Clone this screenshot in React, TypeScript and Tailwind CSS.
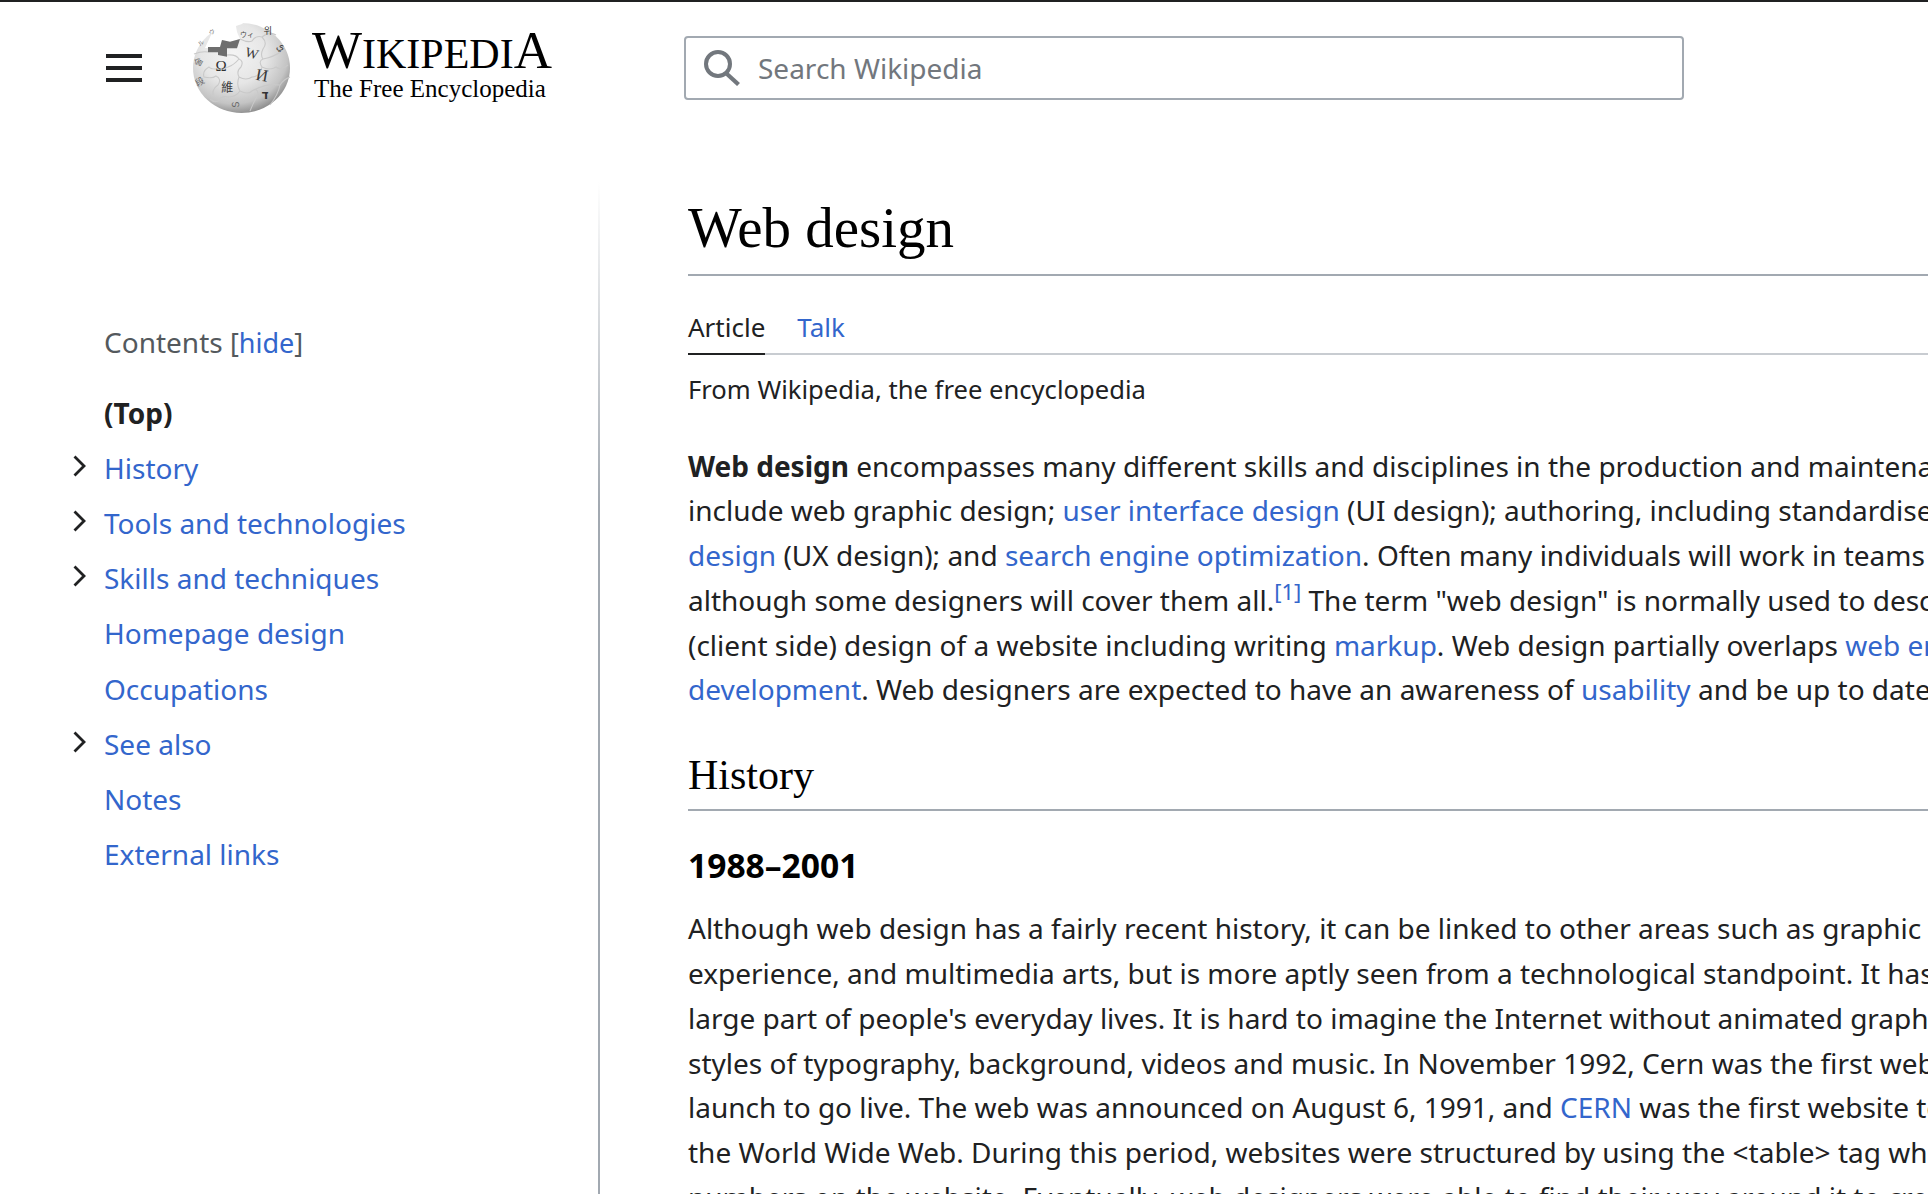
import React from 'react';

const link = 'text-[#3366cc]';

const tocItems = [
  { label: 'History', sub: true },
  { label: 'Tools and technologies', sub: true },
  { label: 'Skills and techniques', sub: true },
  { label: 'Homepage design', sub: false },
  { label: 'Occupations', sub: false },
  { label: 'See also', sub: true },
  { label: 'Notes', sub: false },
  { label: 'External links', sub: false },
];

const Globe = () => (
  <svg width="100" height="92" viewBox="0 0 100 92" className="shrink-0">
    <defs>
      <radialGradient id="sphere" cx="42%" cy="34%" r="68%">
        <stop offset="0%" stopColor="#f4f4f4" />
        <stop offset="50%" stopColor="#e6e6e6" />
        <stop offset="82%" stopColor="#c4c4c4" />
        <stop offset="100%" stopColor="#8c8c8c" />
      </radialGradient>
    </defs>
    <ellipse cx="49.5" cy="47" rx="48.5" ry="45" fill="url(#sphere)" />
    {/* missing puzzle pieces at the top */}
    <path d="M29 -1 L26 6 L19 14 L13 27 L28 27 L30 19 L38 20.7 L48 18 L45 11 L44 5 L50 3 L54 -1 Z" fill="#fff" />
    <path d="M0 0 L14 0 L10 8 L5 14 L0 20 Z" fill="#fff" />
    <path d="M16 26 L28 26 L30 19 L38 20.7 L48 18 L45 27.3 L35 27.3 L35 35.7 L26 34 L26 31.3 L16 31.3 Z" fill="#6e6e6e" />
    {/* seams between the pieces */}
    <path
      d="M2 33 Q10 30 16 31 M35 34 Q44 33 47 38 Q52 40 49 46 Q44 50 47 56 Q54 60 60 56 Q68 56 70 46 Q66 40 71 38 Q82 36 90 30
         M48 18 Q56 22 60 20 Q64 14 70 16 Q76 22 71 28 Q68 34 71 38
         M47 38 Q42 44 36 46 Q20 50 17 46 Q10 50 12 56 Q20 58 24 55 Q30 58 26 64 Q20 68 21 74
         M47 56 Q44 64 48 70 Q56 74 60 70 Q66 66 66 74 Q62 80 58 90
         M60 70 Q74 62 88 64 Q92 58 98 56
         M48 70 Q44 76 36 76 Q30 74 26 80 Q22 82 18 78
         M70 46 Q78 50 84 46 Q88 50 96 44
         M70 16 Q78 10 84 14 M88 64 Q86 74 78 84"
      fill="none"
      stroke="#c9c9c9"
      strokeWidth="1.1"
    />
    <text x="29" y="50" textAnchor="middle" fontSize="15" fontFamily="'Liberation Serif', serif" fill="#333">Ω</text>
    <text x="60" y="37" textAnchor="middle" fontSize="14" fontFamily="'Liberation Serif', serif" fill="#3a3a3a" transform="rotate(16 60 32)">W</text>
    <text x="70" y="60" textAnchor="middle" fontSize="17" fontFamily="'Liberation Serif', serif" fill="#3a3a3a" transform="rotate(10 70 55)">И</text>
    <text x="35.3" y="71" textAnchor="middle" fontSize="12" fontFamily="'Noto Sans CJK TC', serif" fill="#3a3a3a">維</text>
    <text x="73" y="78" textAnchor="middle" fontSize="12" fontWeight="700" fontFamily="'DejaVu Sans', serif" fill="#333">ד</text>
    <text x="55" y="16" textAnchor="middle" fontSize="7" fontFamily="'Noto Sans CJK JP', serif" fill="#444">ウィ</text>
    <text x="76" y="13" textAnchor="middle" fontSize="9" fontFamily="'Noto Sans CJK KR', serif" fill="#333">위</text>
    <text x="88" y="28" textAnchor="middle" fontSize="11" fontFamily="'DejaVu Sans', serif" fill="#444">ي</text>
    <text x="6.5" y="44" textAnchor="middle" fontSize="9" fontFamily="'Noto Sans CJK KR', serif" fill="#666" transform="rotate(-60 6.5 41)">술</text>
    <text x="8" y="64" textAnchor="middle" fontSize="9" fontFamily="'Noto Sans CJK SC', serif" fill="#666" transform="rotate(-30 8 61)">段</text>
    <text x="20" y="13" textAnchor="middle" fontSize="6" fontFamily="'Noto Sans CJK JP', serif" fill="#777" transform="rotate(-40 20 11)">ウ</text>
    <text x="9" y="24" textAnchor="middle" fontSize="6" fontFamily="'Noto Sans CJK JP', serif" fill="#777" transform="rotate(-40 9 22)">ル</text>
    <text x="43" y="86" textAnchor="middle" fontSize="9" fontFamily="'DejaVu Sans', serif" fill="#666">ഗ</text>
  </svg>
);

const Chevron = () => (
  <svg width="14" height="24" viewBox="0 0 14 24" className="shrink-0 mt-[9px] -ml-[1px]">
    <path d="M1.5 1.5 L11 11 L1.5 20.5" fill="none" stroke="#202122" strokeWidth="2.8" />
  </svg>
);

export default function App() {
  return (
    <div className="w-[1928px] h-[1194px] overflow-hidden bg-white border-t-2 border-[#202122] text-[28px] leading-[44.8px] text-[#202122] font-['Noto_Sans',sans-serif]">
      <header className="flex items-start h-[180px] pl-[106px]">
        <div className="flex flex-col gap-[8px] w-[36px] mt-[52px] shrink-0">
          <div className="h-[4px] bg-[#202122]" />
          <div className="h-[4px] bg-[#202122]" />
          <div className="h-[4px] bg-[#202122]" />
        </div>
        <div className="ml-[50px] mt-[19px]">
          <Globe />
        </div>
        <div className="ml-[20px] mt-[24px] w-[240px] shrink-0 font-['Liberation_Serif',serif] text-black">
          <div className="h-[48px] leading-[48px] text-[42px] whitespace-nowrap">
            <span className="text-[53px]">W</span>IKIPEDI<span className="text-[53px]">A</span>
          </div>
          <div className="mt-[1px] pl-[2px] leading-[28px] text-[25px] whitespace-nowrap">The Free Encyclopedia</div>
        </div>
        <div className="ml-[132px] mt-[34px] w-[1000px] h-[64px] shrink-0 flex items-center rounded-[4px] border-2 border-[#a2a9b1] pl-[18px]">
          <svg width="36" height="36" viewBox="0 0 36 36" className="shrink-0">
            <circle cx="14" cy="14" r="12" fill="none" stroke="#72777d" strokeWidth="4" />
            <path d="M23 24 L34.5 34.5" fill="none" stroke="#72777d" strokeWidth="4.2" />
          </svg>
          <span className="ml-[18px] text-[#72777d]">Search Wikipedia</span>
        </div>
      </header>

      <div className="flex h-[1012px]">
        <aside className="w-[598px] shrink-0 pl-[74px] pt-[138px]">
          <div className="pl-[30px] text-[#54595d]">
            Contents <span className="text-[27px]">[<span className={link}>hide</span>]</span>
          </div>
          <div className="pl-[30px] mt-[25px] h-[55.15px] font-bold">(Top)</div>
          {tocItems.map(item => (
            <div key={item.label} className="flex h-[55.15px]">
              <div className="w-[30px] shrink-0">{item.sub && <Chevron />}</div>
              <span className={link}>{item.label}</span>
            </div>
          ))}
        </aside>
        <div className="w-[2px] shrink-0 bg-linear-to-b from-white to-[#a2a9b1] to-[32%]" />

        <main className="flex-1 min-w-0 pl-[88px] whitespace-nowrap">
          <h1 className="mt-[20px] h-[72px] text-[57px] leading-[52px] text-black font-['Liberation_Serif',serif]">Web design</h1>
          <div className="h-[2px] bg-[#a2a9b1]" />
          <div className="flex gap-[32px] h-[79px] border-b-2 border-[#c8ccd1] text-[26px]">
            <div className="pt-[28.5px] h-[79px] border-b-2 border-[#202122]">Article</div>
            <div className={`pt-[28.5px] ${link}`}>Talk</div>
          </div>
          <div className="mt-[12.5px] text-[25.6px] leading-[44px]">From Wikipedia, the free encyclopedia</div>
          <div className="mt-[32px]">
            <p><b>Web design</b> encompasses many different skills and disciplines in the production and maintenance of websites. The different areas of web design</p>
            <p>include web graphic design; <span className={link}>user interface design</span> (UI design); authoring, including standardised code and proprietary software; user experience</p>
            <p><span className={link}>design</span> (UX design); and <span className={link}>search engine optimization</span>. Often many individuals will work in teams covering different aspects of the design process,</p>
            <p>although some designers will cover them all.<sup className={`text-[22px] ${link}`}>[1]</sup> The term "web design" is normally used to describe the design process relating to the front-end</p>
            <p>(client side) design of a website including writing <span className={link}>markup</span>. Web design partially overlaps <span className={link}>web engineering</span> in the broader scope of web</p>
            <p><span className={link}>development</span>. Web designers are expected to have an awareness of <span className={link}>usability</span> and be up to date with web accessibility guidelines.</p>
          </div>
          <h2 className="mt-[35px] text-[42px] leading-[56px] text-black font-['Liberation_Serif',serif]">History</h2>
          <div className="mt-[6px] h-[2px] bg-[#a2a9b1]" />
          <h3 className="mt-[27.5px] text-[33.6px] leading-[52px] font-bold text-black">1988–2001</h3>
          <div className="mt-[15.5px]">
            <p>Although web design has a fairly recent history, it can be linked to other areas such as graphic design, user</p>
            <p>experience, and multimedia arts, but is more aptly seen from a technological standpoint. It has become a</p>
            <p>large part of people's everyday lives. It is hard to imagine the Internet without animated graphics, different</p>
            <p>styles of typography, background, videos and music. In November 1992, Cern was the first website</p>
            <p>launch to go live. The web was announced on August 6, 1991, and <span className={link}>CERN</span> was the first website to join</p>
            <p>the World Wide Web. During this period, websites were structured by using the &lt;table&gt; tag which created</p>
            <p>numbers on the website. Eventually, web designers were able to find their way around it to create more</p>
          </div>
        </main>
      </div>
    </div>
  );
}
